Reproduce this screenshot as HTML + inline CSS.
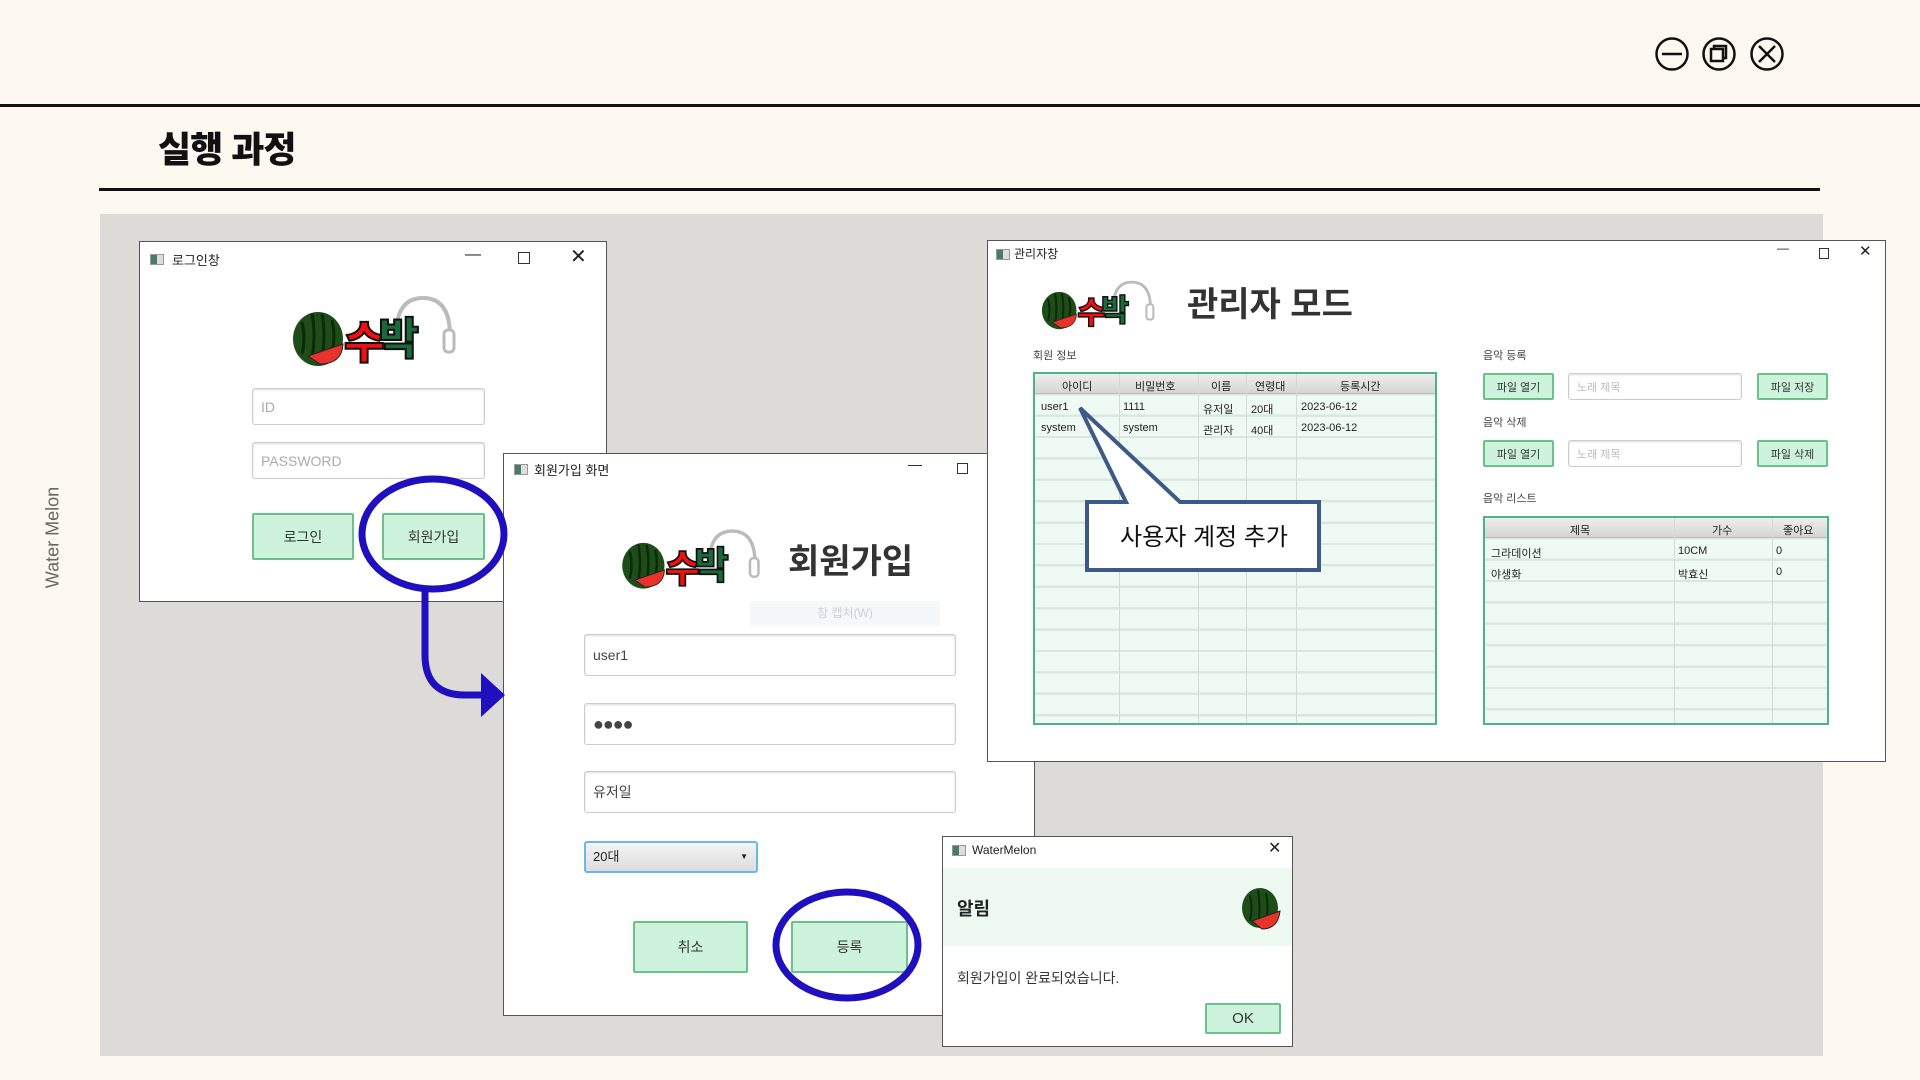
<!DOCTYPE html>
<html><head><meta charset="utf-8">
<style>
*{margin:0;padding:0;box-sizing:border-box}
body{width:1920px;height:1080px;background:#fdf9f1;position:relative;overflow:hidden;font-family:"Liberation Sans","Noto Sans CJK KR",sans-serif;color:#222}
.a{position:absolute}
.win{position:absolute;background:#fff;border:1px solid #555}
.tt{position:absolute;font-size:13px;color:#222}
.ico{position:absolute;width:14px;height:11px;border:1px solid #999;background:linear-gradient(90deg,#4a7a6a 0 50%,#ddd 50%)}
.inp{position:absolute;background:#fff;border:1px solid #ccc;border-radius:3px;box-shadow:inset 0 1px 2px #ddd;font-size:14px;color:#444;padding-left:8px;display:flex;align-items:center}
.btn{position:absolute;background:#cdf3dc;border:2px solid #6cc08c;border-radius:2px;display:flex;align-items:center;justify-content:center;font-size:14px;color:#333}
.sm{font-size:11px}
.tbl{position:absolute;border:2px solid #4fb187;background:#eefaf3;overflow:hidden}
.hd{position:absolute;left:0;right:0;top:0;background:linear-gradient(#eee,#d5d5d5);border-bottom:1px solid #bbb}
.cell{position:absolute;font-size:11px;color:#222;white-space:nowrap}
.logo{position:absolute}
</style></head><body>

<div class="a" style="left:0;top:104px;width:1920px;height:3px;background:#111"></div>
<svg class="a" style="left:1650px;top:35px" width="140" height="38">
<g fill="none" stroke="#111" stroke-width="2.5">
<circle cx="22" cy="19" r="15.5"/><line x1="12" y1="19" x2="32" y2="19"/>
<circle cx="69" cy="19" r="15.5"/><rect x="61" y="14" width="12" height="12"/><path d="M64 14V11h12v12h-3"/>
<circle cx="117" cy="19" r="15.5"/><line x1="109" y1="11" x2="125" y2="27"/><line x1="125" y1="11" x2="109" y2="27"/>
</g></svg>
<div class="a" style="left:158px;top:126px;font-size:36px;font-weight:900;color:#111;letter-spacing:-1px;line-height:48px">실행 과정</div>
<div class="a" style="left:99px;top:188px;width:1721px;height:3px;background:#111"></div>
<div class="a" style="left:100px;top:214px;width:1723px;height:842px;background:#dcdbd7"></div>
<div class="a" style="left:-7px;top:527px;transform:rotate(-90deg);font-size:18px;color:#666;width:120px;text-align:center">Water Melon</div>

<svg width="0" height="0" style="position:absolute">
 <defs>
  <g id="lg">
  <ellipse cx="30" cy="47" rx="25" ry="27" fill="#1f4d1a"/>
  <path d="M14 30q4 16 0 32M24 22q4 20 0 44M34 22q4 20 0 44M44 28q4 16 0 32" stroke="#0b2a08" stroke-width="3" fill="none"/>
  <path d="M20 64 L55 52 Q54 72 32 72Z" fill="#e8322a" stroke="#222"/>
  <path d="M108 44 Q108 6 135 6 Q162 6 162 44" fill="none" stroke="#bbb" stroke-width="4"/>
  <rect x="156" y="38" width="10" height="22" rx="4" fill="#fff" stroke="#bbb" stroke-width="3"/>
  </g>
 </defs>
</svg>

<div class="win" style="left:139px;top:241px;width:468px;height:361px">
 <div class="ico" style="left:10px;top:12px"></div>
 <div class="tt" style="left:32px;top:8px">로그인창</div>
 <div class="tt" style="left:325px;top:4px;font-size:16px">—</div>
 <div class="a" style="left:378px;top:10px;width:12px;height:12px;border:1.5px solid #333"></div>
 <div class="tt" style="left:430px;top:2px;font-size:20px">✕</div>
 <svg class="logo" style="left:148px;top:50px" width="175" height="78" viewBox="0 0 175 78">
  <use href="#lg"/>
  <text x="56" y="66" font-size="44" font-weight="900" fill="#f01010" stroke="#111" stroke-width="2" font-family="Noto Sans CJK KR" letter-spacing="-6">수<tspan fill="#1c6a3a" dy="-4">박</tspan></text>
 </svg>
 <div class="inp" style="left:112px;top:146px;width:233px;height:37px;color:#aaa">ID</div>
 <div class="inp" style="left:112px;top:200px;width:233px;height:37px;color:#aaa">PASSWORD</div>
 <div class="btn" style="left:112px;top:271px;width:102px;height:47px">로그인</div>
 <div class="btn" style="left:242px;top:271px;width:103px;height:47px">회원가입</div>
</div>

<div class="win" style="left:503px;top:453px;width:532px;height:563px">
 <div class="ico" style="left:10px;top:10px"></div>
 <div class="tt" style="left:30px;top:6px">회원가입 화면</div>
 <div class="tt" style="left:404px;top:2px;font-size:14px">—</div>
 <div class="a" style="left:453px;top:9px;width:11px;height:11px;border:1.5px solid #333"></div>
 <svg class="logo" style="left:112px;top:72px" width="152" height="66" viewBox="0 0 175 78">
  <use href="#lg"/>
  <text x="56" y="66" font-size="44" font-weight="900" fill="#f01010" stroke="#111" stroke-width="2" font-family="Noto Sans CJK KR" letter-spacing="-6">수<tspan fill="#1c6a3a" dy="-4">박</tspan></text>
 </svg>
 <div class="a" style="left:284px;top:80px;font-size:34px;font-weight:700;color:#333">회원가입</div>
 <div class="a" style="left:246px;top:147px;width:190px;height:25px;background:#f4f8fb;font-size:12px;color:#ccd;text-align:center;line-height:25px">창 캡처(W)</div>
 <div class="inp" style="left:80px;top:180px;width:372px;height:42px">user1</div>
 <div class="inp" style="left:80px;top:249px;width:372px;height:42px;font-size:18px;letter-spacing:-1px">●●●●</div>
 <div class="inp" style="left:80px;top:317px;width:372px;height:42px">유저일</div>
 <div class="a" style="left:80px;top:387px;width:174px;height:32px;border:2px solid #6ab8e8;border-radius:3px;background:linear-gradient(#f4f4f4,#ddd);font-size:13px;line-height:28px;padding-left:7px">20대<span style="position:absolute;right:8px;top:0;font-size:8px">▼</span></div>
 <div class="btn" style="left:129px;top:467px;width:115px;height:52px">취소</div>
 <div class="btn" style="left:287px;top:467px;width:117px;height:52px">등록</div>
</div>

<div class="win" style="left:987px;top:240px;width:899px;height:522px">
 <div class="ico" style="left:8px;top:8px"></div>
 <div class="tt" style="left:26px;top:4px;font-size:12px">관리자창</div>
 <div class="tt" style="left:789px;top:0px;font-size:12px">—</div>
 <div class="a" style="left:831px;top:7px;width:10px;height:11px;border:1.5px solid #333"></div>
 <div class="tt" style="left:871px;top:1px;font-size:15px">✕</div>
 <svg class="logo" style="left:50px;top:37px" width="122" height="54" viewBox="0 0 175 78">
  <use href="#lg"/>
  <text x="56" y="66" font-size="44" font-weight="900" fill="#f01010" stroke="#111" stroke-width="2" font-family="Noto Sans CJK KR" letter-spacing="-6">수<tspan fill="#1c6a3a" dy="-4">박</tspan></text>
 </svg>
 <div class="a" style="left:199px;top:36px;font-size:34px;font-weight:700;color:#333">관리자 모드</div>
 <div class="a sm" style="left:45px;top:106px;color:#444">회원 정보</div>
 <div class="a sm" style="left:495px;top:106px;color:#444">음악 등록</div>
 <div class="a sm" style="left:495px;top:173px;color:#444">음악 삭제</div>
 <div class="a sm" style="left:495px;top:249px;color:#444">음악 리스트</div>
 <div class="tbl" style="left:45px;top:131px;width:404px;height:353px;background:repeating-linear-gradient(#eefaf3 0 19px,#d8e8de 19px 21.4px)">
  <div class="hd" style="height:20px;"></div>
  <div class="a" style="left:84px;top:0;bottom:0;width:1px;background:#d0ddd4"></div>
  <div class="a" style="left:163px;top:0;bottom:0;width:1px;background:#d0ddd4"></div>
  <div class="a" style="left:211px;top:0;bottom:0;width:1px;background:#d0ddd4"></div>
  <div class="a" style="left:261px;top:0;bottom:0;width:1px;background:#d0ddd4"></div>
  <div class="cell" style="left:27px;top:4px">아이디</div><div class="cell" style="left:100px;top:4px">비밀번호</div><div class="cell" style="left:176px;top:4px">이름</div><div class="cell" style="left:220px;top:4px">연령대</div><div class="cell" style="left:305px;top:4px">등록시간</div>
  <div class="cell" style="left:6px;top:27px">user1</div><div class="cell" style="left:88px;top:27px">1111</div><div class="cell" style="left:168px;top:27px">유저일</div><div class="cell" style="left:216px;top:27px">20대</div><div class="cell" style="left:266px;top:27px">2023-06-12</div>
  <div class="cell" style="left:6px;top:48px">system</div><div class="cell" style="left:88px;top:48px">system</div><div class="cell" style="left:168px;top:48px">관리자</div><div class="cell" style="left:216px;top:48px">40대</div><div class="cell" style="left:266px;top:48px">2023-06-12</div>
 </div>
 <div class="btn sm" style="left:495px;top:132px;width:71px;height:27px">파일 열기</div>
 <div class="inp sm" style="left:580px;top:132px;width:174px;height:27px;color:#bbb">노래 제목</div>
 <div class="btn sm" style="left:769px;top:132px;width:71px;height:27px">파일 저장</div>
 <div class="btn sm" style="left:495px;top:199px;width:71px;height:27px">파일 열기</div>
 <div class="inp sm" style="left:580px;top:199px;width:174px;height:27px;color:#bbb">노래 제목</div>
 <div class="btn sm" style="left:769px;top:199px;width:71px;height:27px">파일 삭제</div>
 <div class="tbl" style="left:495px;top:275px;width:346px;height:209px;background:repeating-linear-gradient(#eefaf3 0 19px,#d8e8de 19px 21.4px)">
  <div class="hd" style="height:20px"></div>
  <div class="a" style="left:189px;top:0;bottom:0;width:1px;background:#d0ddd4"></div>
  <div class="a" style="left:287px;top:0;bottom:0;width:1px;background:#d0ddd4"></div>
  <div class="cell" style="left:85px;top:4px">제목</div><div class="cell" style="left:227px;top:4px">가수</div><div class="cell" style="left:298px;top:4px">좋아요</div>
  <div class="cell" style="left:6px;top:27px">그라데이션</div><div class="cell" style="left:193px;top:27px">10CM</div><div class="cell" style="left:291px;top:27px">0</div>
  <div class="cell" style="left:6px;top:48px">야생화</div><div class="cell" style="left:193px;top:48px">박효신</div><div class="cell" style="left:291px;top:48px">0</div>
 </div>
</div>

<svg class="a" style="left:1070px;top:400px" width="260" height="180">
 <path d="M17 102 H56 L10 8 L110 102 H249 V170 H17 Z" fill="#fff" stroke="#3d5a86" stroke-width="4" stroke-linejoin="miter"/>
</svg>
<div class="a" style="left:1087px;top:517px;width:234px;text-align:center;font-size:24px;color:#111">사용자 계정 추가</div>

<div class="win" style="left:942px;top:836px;width:351px;height:211px">
 <div class="ico" style="left:9px;top:8px"></div>
 <div class="tt" style="left:29px;top:6px;font-size:12px">WaterMelon</div>
 <div class="tt" style="left:325px;top:1px;font-size:16px">✕</div>
 <div class="a" style="left:0;top:31px;width:349px;height:78px;background:#eefaf1"></div>
 <div class="a" style="left:14px;top:58px;font-size:18px;font-weight:700">알림</div>
 <svg class="a" style="left:295px;top:48px" width="46" height="46">
  <ellipse cx="22" cy="23" rx="18" ry="20" fill="#1f4d1a"/>
  <path d="M12 10q3 13 0 26M20 5q3 18 0 36M28 8q3 15 0 30" stroke="#0b2a08" stroke-width="2" fill="none"/>
  <path d="M14 36 L42 26 Q40 44 24 44Z" fill="#e8322a" stroke="#222"/>
 </svg>
 <div class="a" style="left:14px;top:131px;font-size:14px;color:#333">회원가입이 완료되었습니다.</div>
 <div class="btn" style="left:262px;top:166px;width:76px;height:31px;font-size:15px">OK</div>
</div>

<svg class="a" style="left:0;top:0" width="1920" height="1080">
 <g fill="none" stroke="#1f0fbf" stroke-width="7">
  <ellipse cx="433" cy="534" rx="71" ry="55"/>
  <path d="M425 589 V655 Q425 695 465 695 H485"/>
  <ellipse cx="847" cy="945" rx="71" ry="53"/>
 </g>
 <path d="M481 673 L505 695 L481 717Z" fill="#1f0fbf"/>
</svg>
</body></html>
